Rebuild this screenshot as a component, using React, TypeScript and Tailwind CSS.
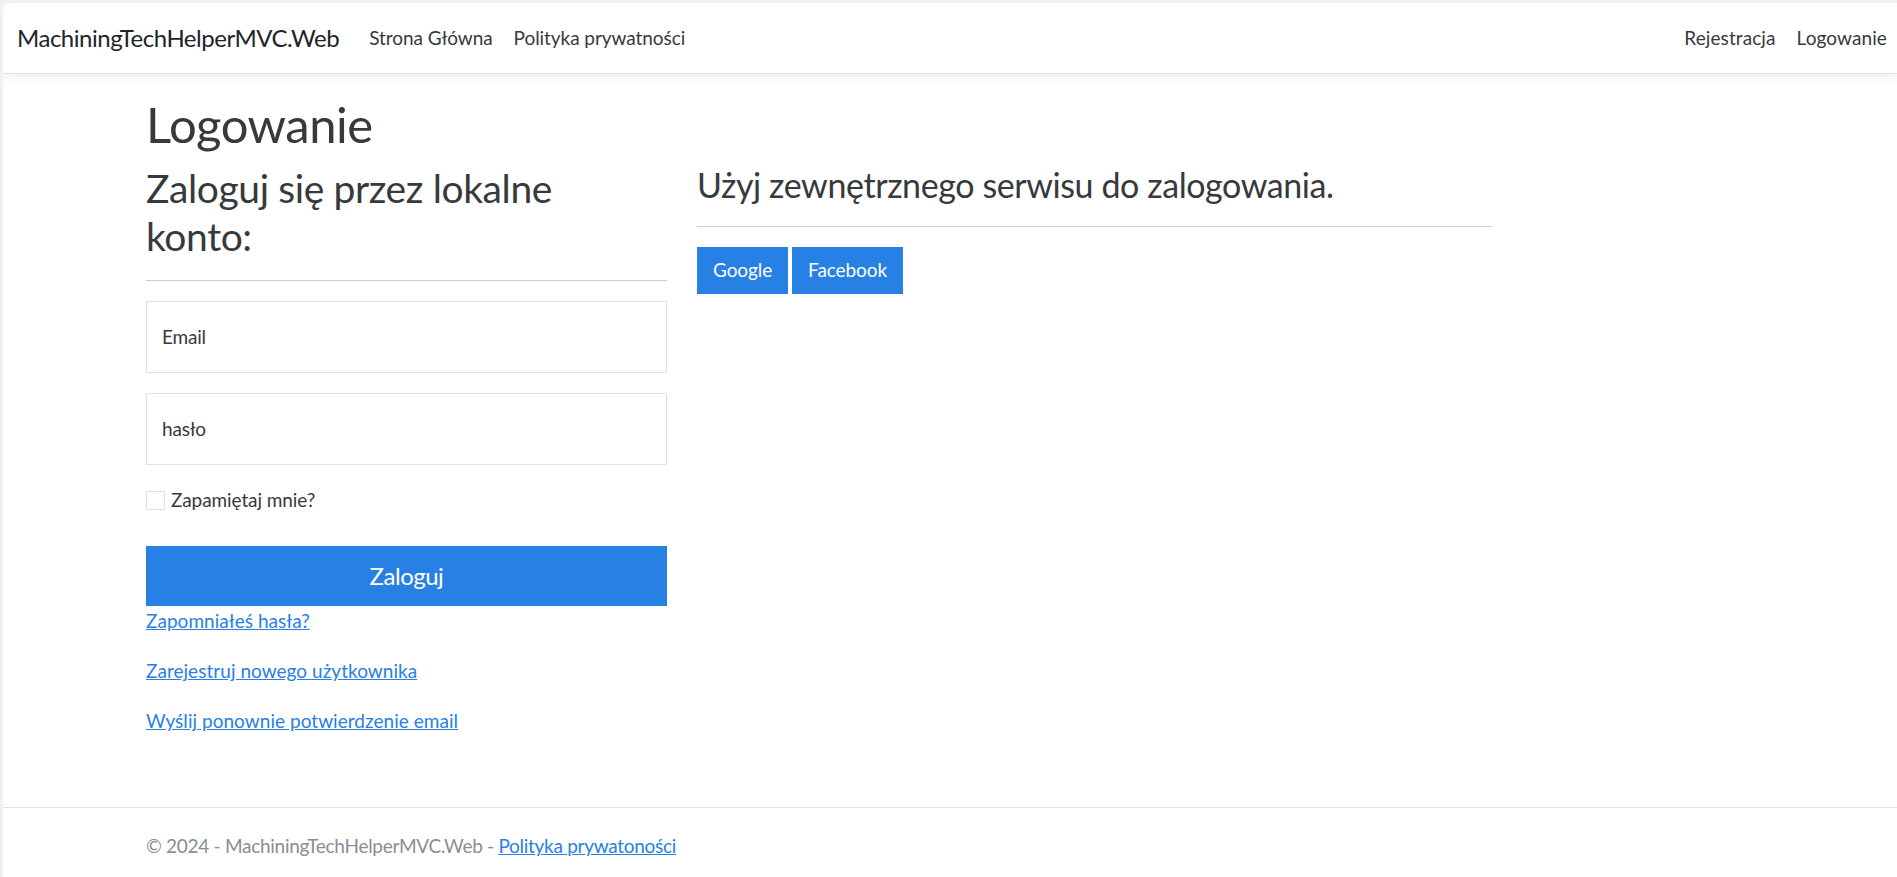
import React from "react";

const font = { fontFamily: "Lato, 'Noto Sans', sans-serif" };

function NavBar() {
  return (
    <nav className="flex h-[71px] shrink-0 items-center justify-between border-b border-[#dee2e6] bg-white pl-[14px] pr-[10px] shadow-[0_4px_10px_rgba(0,0,0,0.06)]">
      <div className="flex items-center">
        <a className="mr-[20px] text-[24px] tracking-[-0.02em] text-[#212529]">MachiningTechHelperMVC.Web</a>
        <ul className="flex gap-[21px] px-[10px] text-[19px] tracking-[-0.003em] text-[#373a3c]">
          <li>Strona Główna</li>
          <li>Polityka prywatności</li>
        </ul>
      </div>
      <ul className="flex gap-[21px] text-[19px] tracking-[0.005em] text-[#373a3c]">
        <li>Rejestracja</li>
        <li>Logowanie</li>
      </ul>
    </nav>
  );
}

function LoginForm() {
  return (
    <section className="w-[521px]">
      <h2 className="text-[39px] leading-[48px] tracking-[-0.01em] text-[#373a3c]">Zaloguj się przez lokalne konto:</h2>
      <hr className="my-[20px] border-t border-[#cdcece]" />
      <div className="mb-[20px] flex h-[72px] items-center border border-[#dee2e6] px-[15px] text-[19px] tracking-[-0.01em] text-[#373a3c]">
        Email
      </div>
      <div className="mb-[20px] flex h-[72px] items-center border border-[#dee2e6] px-[15px] text-[19px] tracking-[-0.01em] text-[#373a3c]">
        hasło
      </div>
      <label className="flex h-[30px] items-center gap-[6px] text-[19px] tracking-[-0.005em] text-[#373a3c]">
        <span className="h-[19px] w-[19px] border border-[#dee2e6] bg-white" />
        Zapamiętaj mnie?
      </label>
      <button className="mt-[31px] h-[60px] w-full bg-[#2780e3] text-[24px] tracking-[-0.02em] text-white">Zaloguj</button>
      <div className="flex flex-col gap-[20px] text-[19px] leading-[30px] tracking-[0.002em]">
        <a className="text-[#2780e3] underline">Zapomniałeś hasła?</a>
        <a className="text-[#2780e3] underline">Zarejestruj nowego użytkownika</a>
        <a className="text-[#2780e3] underline">Wyślij ponownie potwierdzenie email</a>
      </div>
    </section>
  );
}

function ExternalLogin() {
  return (
    <section className="w-[795px]">
      <h3 className="text-[34px] leading-[42px] tracking-[-0.012em] text-[#373a3c]">Użyj zewnętrznego serwisu do zalogowania.</h3>
      <hr className="my-[20px] border-t border-[#cdcece]" />
      <div className="flex gap-[4px]">
        <button className="h-[47px] bg-[#2780e3] px-[16px] text-[19px] tracking-[-0.005em] text-white">Google</button>
        <button className="h-[47px] bg-[#2780e3] px-[16px] text-[19px] tracking-[-0.005em] text-white">Facebook</button>
      </div>
    </section>
  );
}

export default function App() {
  return (
    <div className="h-[877px] overflow-hidden bg-[#f1f1f1] pl-[3px] pt-[3px]" style={font}>
      <div className="flex h-[874px] flex-col overflow-hidden rounded-tl-[8px] bg-white">
        <NavBar />
        <main className="flex-1 pl-[143px] pt-[20px]">
          <h1 className="mb-[10px] text-[49px] leading-[60px] tracking-[-0.01em] text-[#373a3c]">Logowanie</h1>
          <div className="flex gap-[30px]">
            <LoginForm />
            <ExternalLogin />
          </div>
        </main>
        <footer className="h-[70px] shrink-0 border-t border-[#dee2e6] pl-[143px] pt-[23px] text-[19px] leading-[30px] tracking-[-0.015em] text-[#868e96]">
          © 2024 - MachiningTechHelperMVC.Web -{" "}
          <a className="text-[#2780e3] underline">Polityka prywatoności</a>
        </footer>
      </div>
    </div>
  );
}
